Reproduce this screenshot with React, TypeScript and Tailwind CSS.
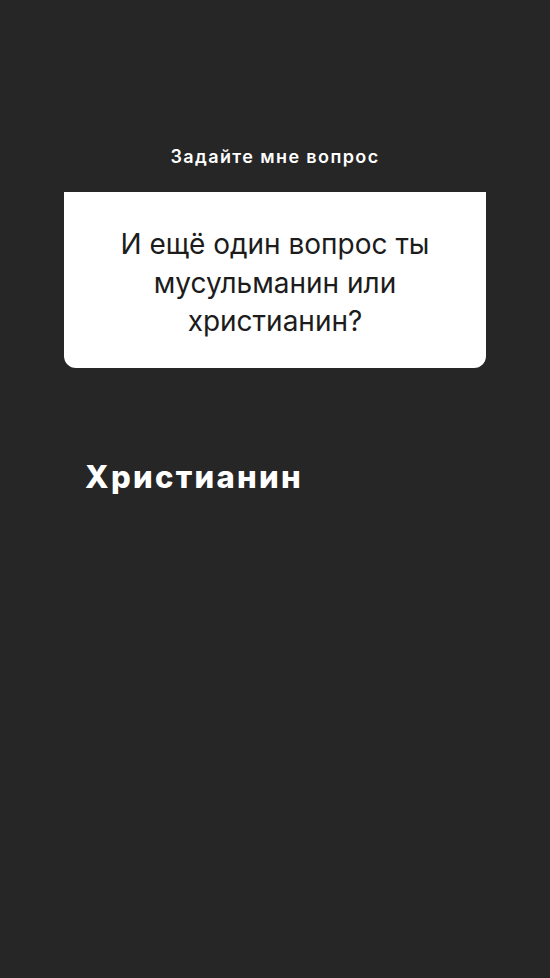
export default function App() {
  return (
    <div
      className="w-[550px] h-[978px] bg-[#262626] flex flex-col"
      style={{ fontFamily: 'Inter, "Liberation Sans", Arial, sans-serif' }}
    >
      <div className="pt-[147px] h-[192px] text-center text-white text-[18px] leading-[20px] font-semibold tracking-[1.4px]">
        Задайте мне вопрос
      </div>
      <div className="ml-[64px] w-[422px] h-[176px] bg-white rounded-b-[12px] pt-[33px] px-4 text-center text-[#1c1c1c] text-[28px] leading-[38.5px]">
        И ещё один вопрос ты
        <br />
        мусульманин или
        <br />
        христианин?
      </div>
      <div className="mt-[91px] ml-[85px] text-white text-[31px] leading-[36px] font-extrabold tracking-[2.3px]">
        Христианин
      </div>
    </div>
  );
}
